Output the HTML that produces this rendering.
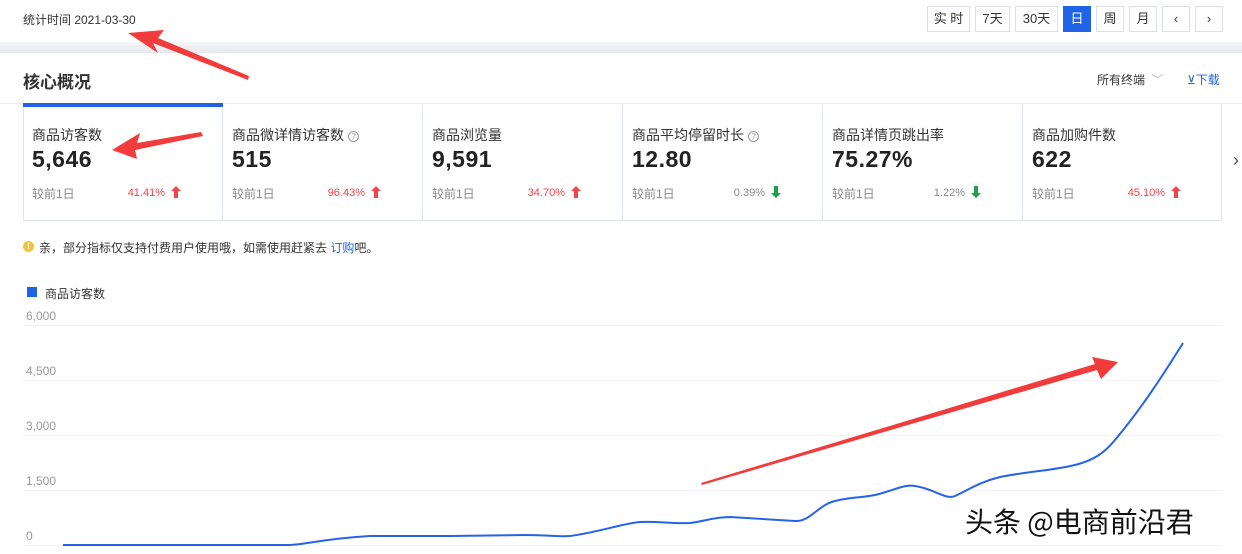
<!DOCTYPE html>
<html><head><meta charset="utf-8"><style>
*{margin:0;padding:0;box-sizing:border-box}
body{width:1242px;height:554px;overflow:hidden;background:#fff;font-family:"Liberation Sans","Noto Sans CJK SC",sans-serif;color:#333;position:relative}
.abs{position:absolute}
.btn{position:absolute;top:6px;height:26px;border:1px solid #dcdfe6;background:#fff;font-size:13px;color:#333;text-align:center;line-height:24px}
.card{position:absolute;top:103px;width:200px;height:118px}
.card .t{position:absolute;left:9px;top:22px;font-size:14px;color:#333}
.card .v{position:absolute;left:9px;top:43px;font-size:23px;font-weight:bold;color:#222;letter-spacing:0.5px}
.card .c{position:absolute;left:9px;top:82px;font-size:12px;color:#888}
.card .p{position:absolute;right:58px;top:84px;font-size:11px;color:#f5424b}
.card .p.g{color:#888}
.card .a{position:absolute;left:148px;top:83px;width:10px;height:12px}
.q{display:inline-block;width:11px;height:11px;border:1px solid #999;border-radius:50%;font-size:8px;line-height:9px;text-align:center;color:#999;vertical-align:1px;margin-left:4px}
.yl{position:absolute;left:26px;font-size:12px;color:#999}
.gl{position:absolute;left:23px;width:1199px;height:1px;background:#f1f2f8}
.vl{position:absolute;top:103px;width:1px;height:118px;background:#e1e6ee;z-index:2}
</style></head><body>
<div class="abs" style="left:23px;top:11px;font-size:12px;color:#333">统计时间 2021-03-30</div>
<div class="btn" style="left:927px;width:43px">实 时</div>
<div class="btn" style="left:975px;width:35px">7天</div>
<div class="btn" style="left:1015px;width:43px">30天</div>
<div class="btn" style="left:1063px;width:28px;background:#1f64e6;border-color:#1f64e6;color:#fff">日</div>
<div class="btn" style="left:1096px;width:28px">周</div>
<div class="btn" style="left:1129px;width:28px">月</div>
<div class="btn" style="left:1162px;width:28px">‹</div>
<div class="btn" style="left:1195px;width:28px">›</div>
<div class="abs" style="left:0;top:42px;width:1242px;height:11px;background:linear-gradient(#f5f6f8,#e6e8ec)"></div>
<div class="abs" style="left:23px;top:68px;font-size:17px;font-weight:bold;color:#333">核心概况</div>
<div class="abs" style="left:1097px;top:71px;font-size:12px;color:#333">所有终端 <span style="color:#bbb;margin-left:3px">﹀</span></div>
<div class="abs" style="left:1187px;top:71px;font-size:12px;color:#1f64e6">⊻下载</div>
<div class="abs" style="left:0;top:103px;width:1242px;height:1px;background:#e8ebf0"></div>
<div class="abs" style="left:23px;top:220px;width:1199px;height:1px;background:#e1e6ee"></div>
<div class="card" style="left:23px"><div class="t">商品访客数</div><div class="v">5,646</div><div class="c">较前1日</div><div class="p">41.41%</div><svg class="a" viewBox="0 0 10 12"><path d="M5 0L10 5H7V12H3V5H0Z" fill="#f5424b"/></svg></div>
<div class="card" style="left:223px"><div class="t">商品微详情访客数<span class="q">?</span></div><div class="v">515</div><div class="c">较前1日</div><div class="p">96.43%</div><svg class="a" viewBox="0 0 10 12"><path d="M5 0L10 5H7V12H3V5H0Z" fill="#f5424b"/></svg></div>
<div class="card" style="left:423px"><div class="t">商品浏览量</div><div class="v">9,591</div><div class="c">较前1日</div><div class="p">34.70%</div><svg class="a" viewBox="0 0 10 12"><path d="M5 0L10 5H7V12H3V5H0Z" fill="#f5424b"/></svg></div>
<div class="card" style="left:623px"><div class="t">商品平均停留时长<span class="q">?</span></div><div class="v">12.80</div><div class="c">较前1日</div><div class="p g">0.39%</div><svg class="a" viewBox="0 0 10 12"><path d="M5 12L10 7H7V0H3V7H0Z" fill="#16a34a"/></svg></div>
<div class="card" style="left:823px"><div class="t">商品详情页跳出率</div><div class="v">75.27%</div><div class="c">较前1日</div><div class="p g">1.22%</div><svg class="a" viewBox="0 0 10 12"><path d="M5 12L10 7H7V0H3V7H0Z" fill="#16a34a"/></svg></div>
<div class="card" style="left:1023px;width:198px"><div class="t">商品加购件数</div><div class="v">622</div><div class="c">较前1日</div><div class="p" style="right:56px">45.10%</div><svg class="a" viewBox="0 0 10 12"><path d="M5 0L10 5H7V12H3V5H0Z" fill="#f5424b"/></svg></div>
<div class="vl" style="left:23px"></div><div class="vl" style="left:222px"></div><div class="vl" style="left:422px"></div><div class="vl" style="left:622px"></div><div class="vl" style="left:822px"></div><div class="vl" style="left:1022px"></div><div class="vl" style="left:1221px"></div>
<div class="abs" style="left:23px;top:103px;width:200px;height:4px;background:#1f64e6;z-index:3"></div>
<div class="abs" style="left:1233px;top:150px;font-size:18px;color:#555">›</div>
<div class="abs" style="left:23px;top:241px;width:11px;height:11px;border-radius:50%;background:#f4c430;color:#fff;font-size:9px;line-height:11px;text-align:center;font-weight:bold">!</div>
<div class="abs" style="left:39px;top:239px;font-size:12px;color:#333">亲，部分指标仅支持付费用户使用哦，如需使用赶紧去 <span style="color:#1f64e6">订购</span>吧。</div>
<div class="abs" style="left:27px;top:287px;width:10px;height:10px;background:#1f64e6"></div>
<div class="abs" style="left:45px;top:285px;font-size:12px;color:#333">商品访客数</div>
<div class="yl" style="top:309px">6,000</div><div class="gl" style="top:325px"></div>
<div class="yl" style="top:364px">4,500</div><div class="gl" style="top:380px"></div>
<div class="yl" style="top:419px">3,000</div><div class="gl" style="top:435px"></div>
<div class="yl" style="top:474px">1,500</div><div class="gl" style="top:490px"></div>
<div class="yl" style="top:529px">0</div><div class="gl" style="top:545px"></div>
<svg class="abs" style="left:0;top:0;z-index:4" width="1242" height="554">
<path d="M63 545 L290 545 C310 544 320 539 370 536 L450 536 L525 535 C550 535 560 537 570 536 C600 532 620 524 640 522 C660 521 670 524 690 523 C705 521 715 517 730 517 L795 521 C810 522 818 505 835 501 C850 497 860 498 875 495 C895 490 905 484 915 486 C935 489 945 500 955 496 C970 489 980 482 1000 477 C1030 471 1050 471 1075 465 C1095 460 1105 452 1115 440 C1140 410 1160 380 1183 343" fill="none" stroke="#2563eb" stroke-width="2"/>
<polygon points="248,80 153,43 158,53 128,33 164,30 158,38 249,76" fill="#f23c3c"/>
<polygon points="201,132 137,143 140,133 112,150 137,159 135,150 203,136" fill="#f23c3c"/>
<polygon points="702,485 1097,370 1101,379 1118,362 1092,357 1095,364 701,483" fill="#f23c3c"/>
<text x="965" y="532" font-family="Noto Sans CJK SC, sans-serif" font-size="28" fill="#111" stroke="#fff" stroke-width="3" paint-order="stroke">头条 @电商前沿君</text>
</svg>
</body></html>
